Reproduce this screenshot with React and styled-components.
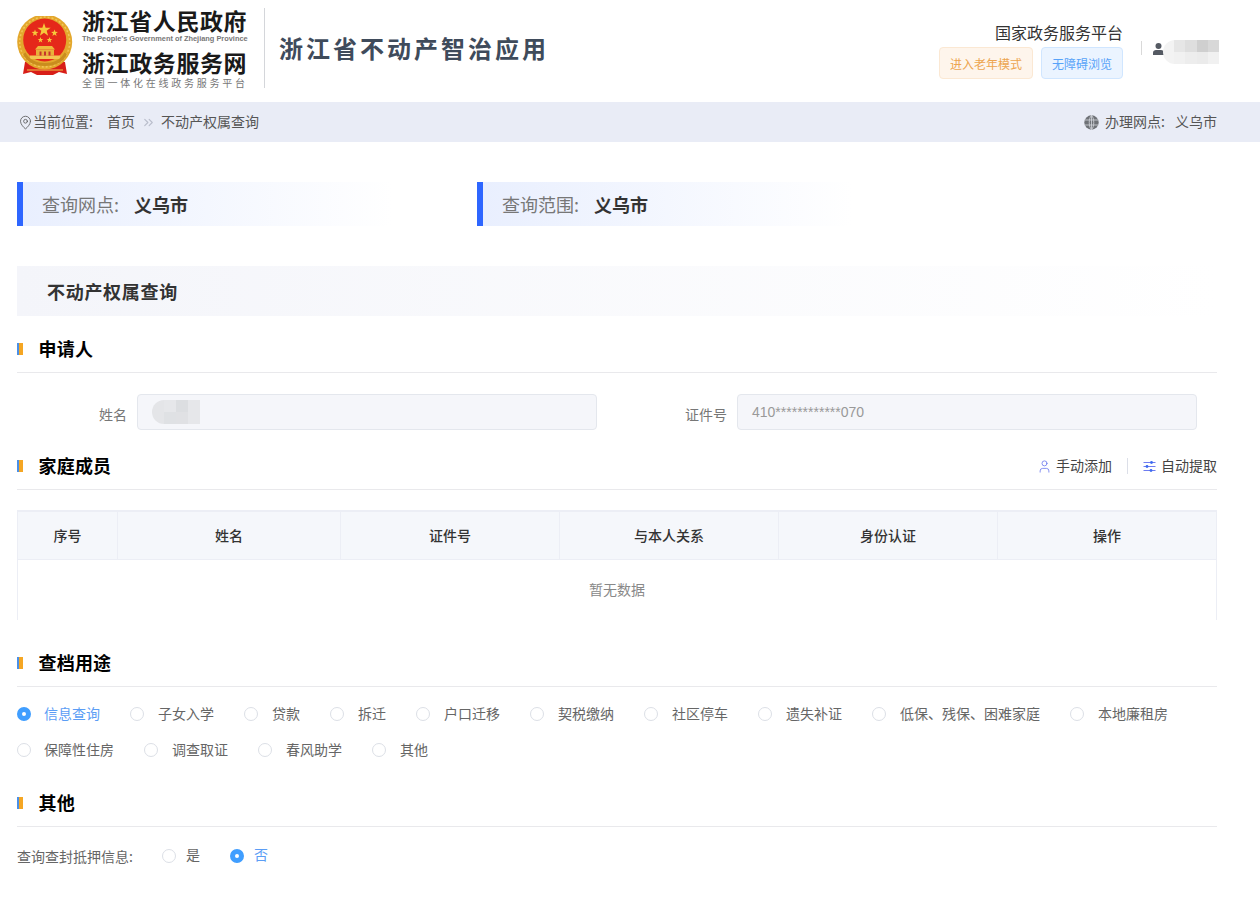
import React from "react";
import styled, { createGlobalStyle } from "styled-components";
import { ChevronsRight, MapPin, User } from "lucide-react";

const GlobalStyle = createGlobalStyle`
  html, body {
    margin: 0;
    padding: 0;
    background: #fff;
    font-family: "Noto Sans CJK SC", "Noto Sans", sans-serif;
    color: #333;
  }
`;

const usages = [
  ["信息查询", "子女入学", "贷款", "拆迁", "户口迁移", "契税缴纳", "社区停车", "遗失补证", "低保、残保、困难家庭", "本地廉租房"],
  ["保障性住房", "调查取证", "春风助学", "其他"],
];

const columns = ["序号", "姓名", "证件号", "与本人关系", "身份认证", "操作"];

const userBlur = [
  ["#f3f3f3", "#e6e6e6", "#dedede", "#cfcfcf", "#d8d8d8"],
  ["#f3f3f3", "#f1f1f1", "#ededed", "#ebebeb", "#f1f1f1"],
];

const nameBlur = [
  ["#e4e5e8", "#e6e7ea", "#dcdee1", "#e6e7ea"],
  ["#e4e5e8", "#dfe1e4", "#e0e1e4", "#e6e7ea"],
];

// five pointed star for the emblem
const starPoints = (cx, cy, r) => {
  const pts = [];
  for (let i = 0; i < 10; i++) {
    const radius = i % 2 === 0 ? r : r * 0.4;
    const angle = -Math.PI / 2 + (i * Math.PI) / 5;
    pts.push(`${(cx + radius * Math.cos(angle)).toFixed(2)},${(cy + radius * Math.sin(angle)).toFixed(2)}`);
  }
  return pts.join(" ");
};

const Emblem = () => (
  <svg width="56" height="60" viewBox="0 0 56 60">
    <path d="M8 46 L6 58 L14 56 L20 59 L36 59 L42 56 L50 58 L48 46 Z" fill="#d81e18" />
    <path d="M10 54h36" stroke="#f0c34a" strokeWidth="1.2" />
    <circle cx="27.7" cy="26" r="27.5" fill="#e3a72c" />
    <circle cx="27.7" cy="26" r="25" fill="none" stroke="#f2c65a" strokeWidth="1.5" strokeDasharray="2 2" />
    <circle cx="27.7" cy="24" r="21.5" fill="#e5281a" />
    <polygon points={starPoints(27, 14, 7)} fill="#f6c93c" />
    <polygon points={starPoints(18, 17, 3.6)} fill="#f6c93c" />
    <polygon points={starPoints(37.5, 17, 3.6)} fill="#f6c93c" />
    <polygon points={starPoints(23.5, 24, 3)} fill="#f6c93c" />
    <polygon points={starPoints(32.5, 24, 3)} fill="#f6c93c" />
    <path d="M21 30h14l3 3.5H18z" fill="#efb93c" />
    <rect x="19" y="33.5" width="18" height="6" fill="#e8b03a" />
    <rect x="13" y="39.5" width="30" height="3.5" fill="#f2c552" />
    <path d="M22.5 35.5h2v4h-2zM27 35.5h2v4h-2zM31.5 35.5h2v4h-2z" fill="#c5352a" />
    <path d="M6 38c4 9 13 12 22 12s18-3 22-12l-2.5-1.5C44 44 36 47 28 47S12 44 8.500 36.500z" fill="#c98d1e" />
  </svg>
);

const GlobeIcon = () => (
  <svg width="15" height="15" viewBox="0 0 15 15">
    <circle cx="7.5" cy="7.5" r="7.2" fill="#6f7277" />
    <path
      d="M.5 5h14M.5 10h14M7.5.3v14.4M7.5.3C4.5 3 4.5 12 7.5 14.7M7.5.3c3 2.7 3 11.7 0 14.4"
      stroke="#d6d8de"
      strokeWidth="0.8"
      fill="none"
    />
  </svg>
);

const PersonIcon = () => (
  <svg width="11" height="12" viewBox="0 0 11 12">
    <circle cx="5.5" cy="3" r="3" fill="#555a63" />
    <path d="M0 12V9.6C0 8 1.4 7 3 7h5c1.6 0 3 1 3 2.6V12z" fill="#555a63" />
  </svg>
);

const SlidersIcon = () => (
  <svg width="13" height="13" viewBox="0 0 13 13" fill="none">
    <path d="M0.5 2.5h12M0.5 6.5h12M0.5 10.500h12" stroke="#6f7df0" strokeWidth="1" />
    <circle cx="8.5" cy="2.5" r="1.4" fill="#3d6bf0" />
    <circle cx="4" cy="6.5" r="1.4" fill="#3d6bf0" />
    <circle cx="8" cy="10.5" r="1.4" fill="#3d6bf0" />
  </svg>
);

const Mosaic = ({ rows, size }) => (
  <MosaicBox $size={size} $cols={rows[0].length}>
    {rows.flat().map((color, i) => (
      <MosaicCell key={i} $color={color} />
    ))}
  </MosaicBox>
);

const Radio = ({ label, checked }) => (
  <RadioItem $checked={checked}>
    <RadioDot $checked={checked} />
    <RadioText>{label}</RadioText>
  </RadioItem>
);

const SectionTitle = ({ title, children }) => (
  <SectionHead>
    <Marker />
    <SectionName>{title}</SectionName>
    {children}
  </SectionHead>
);

const App = () => {
  return (
    <>
      <GlobalStyle />
      <Header>
        <Brand>
          <EmblemBox>
            <Emblem />
          </EmblemBox>
          <BrandText>
            <BrandName>浙江省人民政府</BrandName>
            <BrandEnglish>The People's Government of Zhejiang Province</BrandEnglish>
            <BrandName $second>浙江政务服务网</BrandName>
            <BrandSlogan>全国一体化在线政务服务平台</BrandSlogan>
          </BrandText>
          <BrandDivider />
          <AppTitle>浙江省不动产智治应用</AppTitle>
        </Brand>
        <HeaderRight>
          <Platform>
            <PlatformName>国家政务服务平台</PlatformName>
            <ModeButtons>
              <ModeButton $tone="orange">进入老年模式</ModeButton>
              <ModeButton $tone="blue">无障碍浏览</ModeButton>
            </ModeButtons>
          </Platform>
          <UserBox>
            <PersonIcon />
            <UserBlur>
              <Mosaic rows={userBlur} size={11.2} />
            </UserBlur>
          </UserBox>
        </HeaderRight>
      </Header>

      <CrumbBar>
        <Crumbs>
          <MapPin size={15} strokeWidth={1.3} color="#555" />
          <CrumbLabel>当前位置:</CrumbLabel>
          <CrumbLink>首页</CrumbLink>
          <ChevronsRight size={15} strokeWidth={1.8} color="#b9bdcb" />
          <CrumbLink>不动产权属查询</CrumbLink>
        </Crumbs>
        <Hall>
          <GlobeIcon />
          <HallLabel>办理网点:</HallLabel>
          <HallValue>义乌市</HallValue>
        </Hall>
      </CrumbBar>

      <Content>
        <InfoRow>
          <InfoStrip>
            <InfoLabel>查询网点:</InfoLabel>
            <InfoValue>义乌市</InfoValue>
          </InfoStrip>
          <InfoStrip>
            <InfoLabel>查询范围:</InfoLabel>
            <InfoValue>义乌市</InfoValue>
          </InfoStrip>
        </InfoRow>

        <PageTitle>不动产权属查询</PageTitle>

        <SectionTitle title="申请人" />
        <FormRow>
          <Field>
            <FieldLabel>姓名</FieldLabel>
            <FieldInput>
              <Mosaic rows={nameBlur} size={12} />
            </FieldInput>
          </Field>
          <Field>
            <FieldLabel>证件号</FieldLabel>
            <FieldInput>410************070</FieldInput>
          </Field>
        </FormRow>

        <Gap $h={3} />
        <SectionTitle title="家庭成员">
          <Actions>
            <Action>
              <User size={15} strokeWidth={1.3} color="#6b78ee" />
              <ActionText>手动添加</ActionText>
            </Action>
            <ActionDivider />
            <Action>
              <SlidersIcon />
              <ActionText>自动提取</ActionText>
            </Action>
          </Actions>
        </SectionTitle>

        <Table>
          <TableHead>
            {columns.map((name) => (
              <HeadCell key={name}>{name}</HeadCell>
            ))}
          </TableHead>
          <TableEmpty>暂无数据</TableEmpty>
        </Table>

        <Gap $h={10} />
        <SectionTitle title="查档用途" />
        <RadioRows>
          {usages.map((row, i) => (
            <RadioRow key={i}>
              {row.map((label) => (
                <Radio key={label} label={label} checked={label === "信息查询"} />
              ))}
            </RadioRow>
          ))}
        </RadioRows>

        <Gap $h={10} />
        <SectionTitle title="其他" />
        <OtherRow>
          <OtherLabel>查询查封抵押信息:</OtherLabel>
          <Radio label="是" />
          <Radio label="否" checked />
        </OtherRow>
      </Content>
    </>
  );
};

const Header = styled.header`
  height: 102px;
  box-sizing: border-box;
  display: flex;
  justify-content: space-between;
  align-items: flex-start;
  padding: 8px 41px 0 17px;
  background: #fff;
`;

const Brand = styled.div`
  display: flex;
  align-items: flex-start;
`;

const EmblemBox = styled.div`
  width: 65px;
  height: 60px;
  margin-top: 8px;
`;

const BrandText = styled.div`
  width: 165px;
  display: flex;
  flex-direction: column;
`;

const BrandName = styled.div`
  font-size: 23px;
  line-height: 24px;
  font-weight: 700;
  letter-spacing: 0.6px;
  color: #1a1a1a;
  white-space: nowrap;
  margin-top: ${(p) => (p.$second ? "6px" : "0")};
`;

const BrandEnglish = styled.div`
  font-family: "Liberation Sans", sans-serif;
  font-size: 7.4px;
  line-height: 11px;
  font-weight: 700;
  color: #777;
  white-space: nowrap;
  margin-top: 1px;
`;

const BrandSlogan = styled.div`
  font-size: 10px;
  line-height: 12px;
  letter-spacing: 2.75px;
  color: #777;
  white-space: nowrap;
  margin-top: 3px;
`;

const BrandDivider = styled.div`
  width: 1px;
  height: 80px;
  margin: 0 14px 0 17px;
  background: #d4d6da;
`;

const AppTitle = styled.h1`
  margin: 24px 0 0;
  font-size: 24px;
  line-height: 32px;
  font-weight: 700;
  letter-spacing: 3px;
  color: #3f4b5b;
`;

const HeaderRight = styled.div`
  display: flex;
  align-items: flex-start;
  margin-top: 13px;
`;

const Platform = styled.div`
  display: flex;
  flex-direction: column;
  align-items: flex-end;
`;

const PlatformName = styled.div`
  font-size: 16px;
  line-height: 22px;
  color: #333;
`;

const ModeButtons = styled.div`
  display: flex;
  gap: 8px;
  margin-top: 4px;
`;

const ModeButton = styled.div`
  height: 32px;
  padding: 0 10px;
  box-sizing: border-box;
  display: flex;
  align-items: center;
  border-radius: 4px;
  font-size: 12px;
  border: 1px solid ${(p) => (p.$tone === "orange" ? "#fbe8d3" : "#d0e6ff")};
  background: ${(p) => (p.$tone === "orange" ? "#fef5ec" : "#ebf4ff")};
  color: ${(p) => (p.$tone === "orange" ? "#eda54f" : "#57a3f9")};
`;

const UserBox = styled.div`
  display: flex;
  align-items: flex-start;
  margin: 20px 0 0 18px;
  padding-left: 11px;
  height: 14px;
  border-left: 1px solid #d9d9d9;

  svg {
    margin-top: 2px;
    flex-shrink: 0;
  }
`;

const UserBlur = styled.div`
  margin: -1px 0 0 -1px;
`;

const MosaicBox = styled.div`
  display: grid;
  grid-template-columns: repeat(${(p) => p.$cols}, ${(p) => p.$size}px);
  grid-auto-rows: 12px;
  border-radius: 12px 0 0 12px;
  overflow: hidden;
`;

const MosaicCell = styled.div`
  background: ${(p) => p.$color};
`;

const CrumbBar = styled.div`
  height: 40px;
  display: flex;
  justify-content: space-between;
  align-items: center;
  padding: 0 43px 0 18px;
  background: #e9ecf6;
  font-size: 14px;
  color: #555;
`;

const Crumbs = styled.div`
  display: flex;
  align-items: center;
`;

const CrumbLabel = styled.span`
  margin: 0 14px 0 0;
  padding-bottom: 2px;
`;

const CrumbLink = styled.span`
  margin-right: 6px;
  padding-bottom: 2px;

  & + svg {
    margin: 0 5px 0 0;
  }
`;

const Hall = styled.div`
  display: flex;
  align-items: center;
`;

const HallLabel = styled.span`
  margin: 0 10px 0 6px;
  padding-bottom: 2px;
`;

const HallValue = styled.span`
  padding-bottom: 2px;
`;

const Content = styled.main`
  width: 1200px;
  padding: 40px 0 0 17px;
`;

const InfoRow = styled.div`
  display: flex;
  gap: 85px;
`;

const InfoStrip = styled.div`
  width: 375px;
  height: 44px;
  box-sizing: border-box;
  display: flex;
  align-items: center;
  padding-left: 19px;
  border-left: 6px solid #2e66ff;
  background: linear-gradient(90deg, #e9effe, #ffffff);
`;

const InfoLabel = styled.span`
  font-size: 18px;
  color: #777;
`;

const InfoValue = styled.span`
  margin-left: 15px;
  font-size: 18px;
  font-weight: 700;
  color: #333;
`;

const PageTitle = styled.h2`
  height: 50px;
  margin: 40px 0 0;
  padding-left: 30px;
  line-height: 50px;
  font-size: 18px;
  font-weight: 700;
  letter-spacing: 0.7px;
  color: #333;
  background: linear-gradient(90deg, #f4f5fa, #ffffff);
`;

const SectionHead = styled.div`
  display: flex;
  align-items: center;
  height: 24px;
  padding: 21px 0 11px;
  border-bottom: 1px solid #e9e9ec;
`;

const Marker = styled.span`
  width: 6px;
  height: 12px;
  background: linear-gradient(90deg, #4a90e8 0 33%, #f5a623 33%);
`;

const SectionName = styled.span`
  margin-left: 15.500px;
  padding-bottom: 2px;
  font-size: 18px;
  font-weight: 700;
  letter-spacing: 0.2px;
  color: #000;
`;

const FormRow = styled.div`
  display: flex;
  margin-top: 21px;
`;

const Field = styled.div`
  width: 600px;
  display: flex;
  align-items: center;
`;

const FieldLabel = styled.label`
  width: 120px;
  margin-top: 4px;
  padding-right: 10px;
  box-sizing: border-box;
  text-align: right;
  font-size: 14px;
  color: #777;
`;

const FieldInput = styled.div`
  width: 460px;
  height: 36px;
  box-sizing: border-box;
  display: flex;
  align-items: center;
  padding: 0 14px;
  border: 1px solid #e4e7ed;
  border-radius: 4px;
  background: #f5f6fa;
  font-family: "Liberation Sans", "Noto Sans CJK SC", sans-serif;
  font-size: 14px;
  color: #999;
`;

const Gap = styled.div`
  height: ${(p) => p.$h}px;
`;

const Actions = styled.div`
  margin-left: auto;
  display: flex;
  align-items: center;
`;

const Action = styled.div`
  display: flex;
  align-items: center;
  gap: 4px;
  font-size: 14px;
  color: #444;

  & + span + & {
    gap: 5px;
  }
`;

const ActionText = styled.span`
  padding-bottom: 2px;
`;

const ActionDivider = styled.span`
  width: 1px;
  height: 16px;
  margin: 0 15px;
  background: #dcdfe8;
`;

const Table = styled.div`
  margin-top: 20px;
  box-sizing: border-box;
  border-top: 2px solid #eceef5;
  border-left: 1px solid #eceef5;
  border-right: 1px solid #eceef5;
`;

const TableHead = styled.div`
  display: grid;
  grid-template-columns: 99px 223px 219px 219px 219px 1fr;
  height: 48px;
  box-sizing: border-box;
  border-bottom: 1px solid #eceef5;
  background: #f5f7fb;
`;

const HeadCell = styled.div`
  display: flex;
  align-items: center;
  justify-content: center;
  padding-bottom: 2px;
  font-size: 14px;
  font-weight: 500;
  color: #333;

  & + & {
    border-left: 1px solid #eceef5;
  }
`;

const TableEmpty = styled.div`
  height: 60px;
  display: flex;
  align-items: center;
  justify-content: center;
  padding-bottom: 2px;
  box-sizing: border-box;
  font-size: 14px;
  color: #888;
`;

const RadioRows = styled.div`
  display: flex;
  flex-direction: column;
  gap: 16px;
  margin-top: 17px;
`;

const RadioRow = styled.div`
  display: flex;
  gap: 30px;
`;

const RadioItem = styled.label`
  display: flex;
  align-items: center;
  height: 20px;
  font-size: 14px;
  white-space: nowrap;
  color: ${(p) => (p.$checked ? "#5b9df5" : "#666")};
`;

const RadioDot = styled.span`
  width: 14px;
  height: 14px;
  margin-right: 14px;
  box-sizing: border-box;
  border-radius: 50%;
  background: #fff;
  border: ${(p) => (p.$checked ? "5px solid #409eff" : "1px solid #dcdfe6")};

  ${RadioItem}:first-child & {
    margin-right: 13px;
  }
`;

const RadioText = styled.span`
  padding-bottom: 2px;
`;

const OtherRow = styled.div`
  display: flex;
  align-items: center;
  margin-top: 19px;

  ${RadioItem} {
    margin-right: 30px;
  }

  ${RadioDot} {
    margin-right: 10px;
  }

  ${RadioText} {
    padding-bottom: 4px;
  }
`;

const OtherLabel = styled.span`
  width: 145px;
  font-size: 14px;
  color: #666;
`;

export default App;
